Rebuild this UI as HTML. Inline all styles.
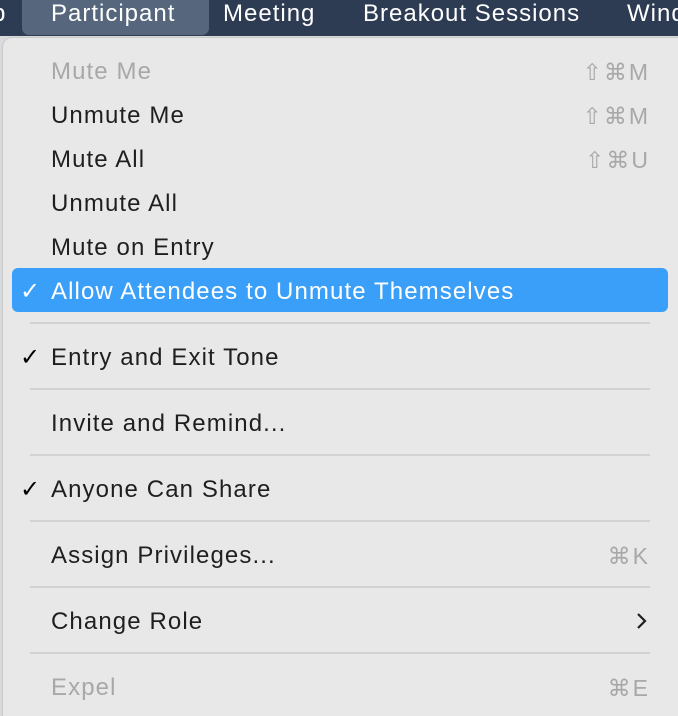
<!DOCTYPE html>
<html><head><style>
html,body{margin:0;width:678px;height:716px;overflow:hidden}
body{background:#d8dadd;font-family:"Liberation Sans","DejaVu Sans",sans-serif;position:relative}
.bar{position:absolute;left:0;top:0;width:678px;height:36px;background:#2e3c53;color:#fff;font-size:24px;letter-spacing:1px}
.bar span{position:absolute;top:0px}
.sel{position:absolute;left:22px;top:0;width:187px;height:35px;background:#56667c;border-radius:0 0 7px 7px}
.menu{position:absolute;left:2px;top:37px;width:690px;height:700px;background:#e8e8e8;border:1px solid #c9c9c9;border-radius:10px;box-sizing:border-box}
.it{position:absolute;left:51px;font-size:24px;color:#1f1f1f;line-height:30px;letter-spacing:1.1px;white-space:nowrap;margin-top:1px}
.dis{color:#a8a8a8}
.sc{position:absolute;right:28px;font-size:23px;color:#a8a8a8;line-height:30px;letter-spacing:2px;margin-top:1px}
.ck{position:absolute;left:20px;font-size:24px;line-height:30px;font-weight:bold;margin-top:1px}
.hl{position:absolute;left:12px;top:268px;width:656px;height:44px;background:#3a9ff8;border-radius:6px}
.sep{position:absolute;left:30px;width:620px;height:2px;background:#d2d2d2}
</style></head><body>
<div class="bar"><div class="sel"></div>
<span style="left:-8px">p</span><span style="left:51px">Participant</span><span style="left:223px">Meeting</span><span style="left:363px">Breakout Sessions</span><span style="left:627px">Wind</span></div>
<div class="menu"></div>
<div class="hl"></div>
<div class="it dis" style="top:56px">Mute Me</div><div class="sc" style="top:56px">⇧⌘M</div>
<div class="it" style="top:100px">Unmute Me</div><div class="sc" style="top:100px">⇧⌘M</div>
<div class="it" style="top:144px">Mute All</div><div class="sc" style="top:144px">⇧⌘U</div>
<div class="it" style="top:188px">Unmute All</div>
<div class="it" style="top:232px">Mute on Entry</div>
<div class="ck" style="top:276px;color:#fff">✓</div><div class="it" style="top:276px;color:#fff">Allow Attendees to Unmute Themselves</div>
<div class="sep" style="top:322px"></div>
<div class="ck" style="top:342px">✓</div><div class="it" style="top:342px">Entry and Exit Tone</div>
<div class="sep" style="top:388px"></div>
<div class="it" style="top:408px">Invite and Remind...</div>
<div class="sep" style="top:454px"></div>
<div class="ck" style="top:474px">✓</div><div class="it" style="top:474px">Anyone Can Share</div>
<div class="sep" style="top:520px"></div>
<div class="it" style="top:540px">Assign Privileges...</div><div class="sc" style="top:540px">⌘K</div>
<div class="sep" style="top:586px"></div>
<div class="it" style="top:606px">Change Role</div>
<svg style="position:absolute;left:636px;top:612px" width="12" height="18"><path d="M2 2 L9 9 L2 16" stroke="#1f1f1f" stroke-width="2.2" fill="none"/></svg>
<div class="sep" style="top:652px"></div>
<div class="it dis" style="top:672px">Expel</div><div class="sc" style="top:672px">⌘E</div>
</body></html>
